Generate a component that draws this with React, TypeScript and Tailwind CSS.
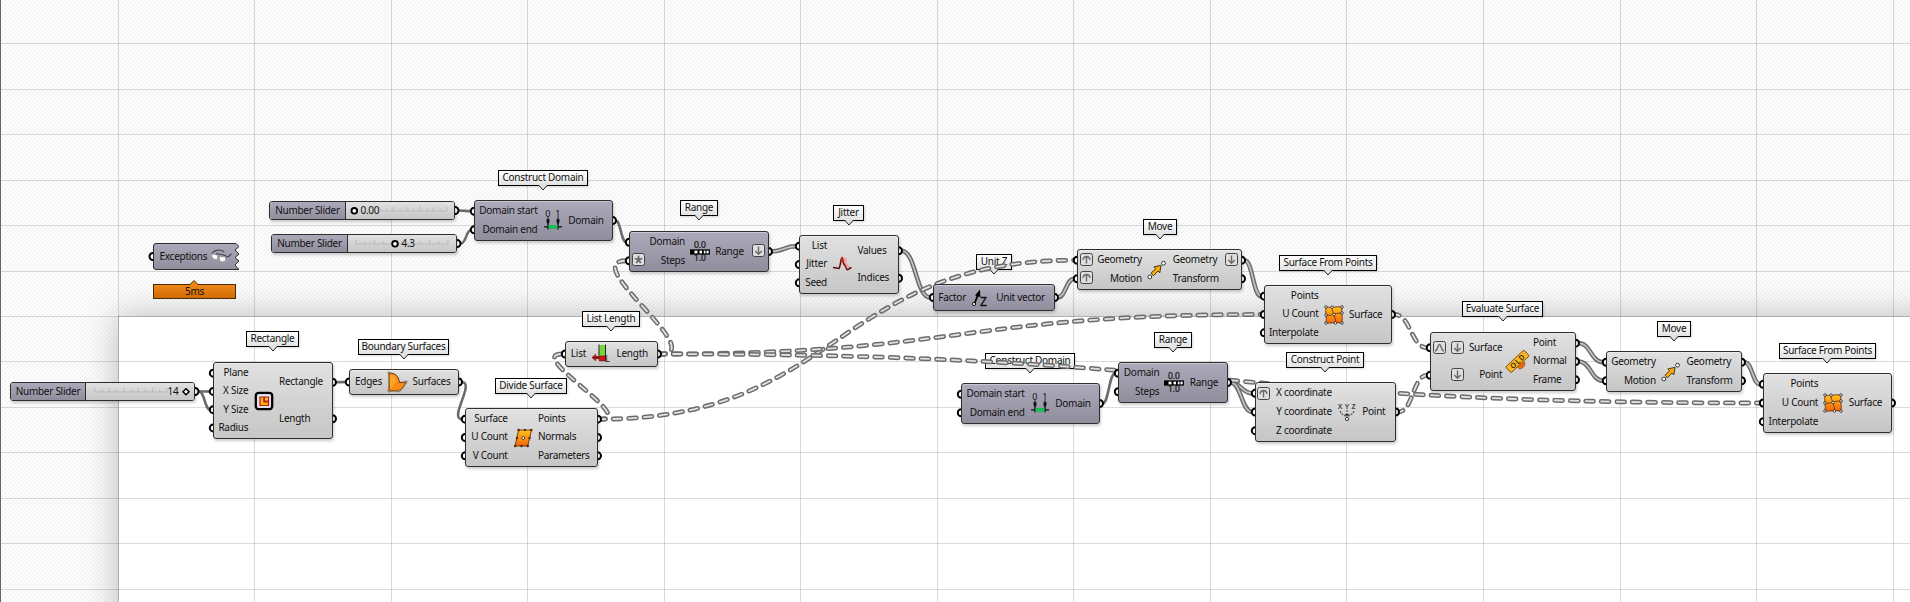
import React from "react";

type IconName =
  | "rectangle" | "boundary" | "divide" | "length" | "domain" | "range" | "jitter"
  | "unitz" | "move" | "surface" | "xyz" | "old";
type ChipName = "up" | "down" | "star" | "curve";
type Chip = { kind: ChipName; x: number; y: number };
type NodeSpec = {
  id: string;
  name: string;
  x: number; y: number; r: number; b: number;
  inputs: string[];
  outputs: string[];
  inRight: number;
  outLeft: number;
  icon: IconName;
  dark?: boolean;
  chips?: Chip[];
  tag: { x: number; r: number; y: number; tip: number };
};

const NODES: NodeSpec[] = [
  { id: "rect", name: "Rectangle", x: 213, y: 362, r: 333, b: 439, inputs: ["Plane", "X Size", "Y Size", "Radius"], outputs: ["Rectangle", "Length"], inRight: 248.3, outLeft: 279, icon: "rectangle", tag: { x: 246, r: 299, y: 331, tip: 273 } },
  { id: "bound", name: "Boundary Surfaces", x: 349, y: 369, r: 459, b: 395, inputs: ["Edges"], outputs: ["Surfaces"], inRight: 382, outLeft: 412.5, icon: "boundary", tag: { x: 358, r: 449, y: 339, tip: 404 } },
  { id: "div", name: "Divide Surface", x: 465, y: 408, r: 598, b: 467, inputs: ["Surface", "U Count", "V Count"], outputs: ["Points", "Normals", "Parameters"], inRight: 507.7, outLeft: 538, icon: "divide", tag: { x: 495, r: 567, y: 378, tip: 531 } },
  { id: "len", name: "List Length", x: 565, y: 341, r: 658, b: 367, inputs: ["List"], outputs: ["Length"], inRight: 586, outLeft: 616.5, icon: "length", tag: { x: 582, r: 640, y: 311, tip: 611 } },
  { id: "cd1", name: "Construct Domain", x: 474, y: 200, r: 613, b: 241, inputs: ["Domain start", "Domain end"], outputs: ["Domain"], inRight: 537.5, outLeft: 568.3, icon: "domain", dark: true, tag: { x: 498, r: 588, y: 170, tip: 543 } },
  { id: "rng1", name: "Range", x: 629, y: 231, r: 769, b: 272, inputs: ["Domain", "Steps"], outputs: ["Range"], inRight: 685, outLeft: 715.3, icon: "range", dark: true, chips: [{ kind: "star", x: 632, y: 253 }, { kind: "down", x: 752, y: 244 }], tag: { x: 680, r: 718, y: 200, tip: 699 } },
  { id: "jit", name: "Jitter", x: 799, y: 235, r: 899, b: 294, inputs: ["List", "Jitter", "Seed"], outputs: ["Values", "Indices"], inRight: 827, outLeft: 857.5, icon: "jitter", tag: { x: 833, r: 864, y: 205, tip: 849 } },
  { id: "uz", name: "Unit Z", x: 933, y: 284, r: 1055, b: 311, inputs: ["Factor"], outputs: ["Unit vector"], inRight: 966, outLeft: 996.3, icon: "unitz", dark: true, tag: { x: 976, r: 1012, y: 254, tip: 994 } },
  { id: "mv1", name: "Move", x: 1077, y: 249, r: 1242, b: 290, inputs: ["Geometry", "Motion"], outputs: ["Geometry", "Transform"], inRight: 1141.8, outLeft: 1172.7, icon: "move", chips: [{ kind: "up", x: 1080, y: 253 }, { kind: "up", x: 1080, y: 271 }, { kind: "down", x: 1225, y: 253 }], tag: { x: 1143, r: 1177, y: 219, tip: 1160 } },
  { id: "sfp1", name: "Surface From Points", x: 1264, y: 285, r: 1392, b: 344, inputs: ["Points", "U Count", "Interpolate"], outputs: ["Surface"], inRight: 1318.5, outLeft: 1349, icon: "surface", tag: { x: 1279, r: 1377, y: 255, tip: 1328 } },
  { id: "cd2", name: "Construct Domain", x: 961, y: 383, r: 1100, b: 424, inputs: ["Domain start", "Domain end"], outputs: ["Domain"], inRight: 1024.7, outLeft: 1055.3, icon: "domain", dark: true, tag: { x: 985, r: 1075, y: 353, tip: 1030 } },
  { id: "rng2", name: "Range", x: 1118, y: 362, r: 1228, b: 403, inputs: ["Domain", "Steps"], outputs: ["Range"], inRight: 1159.3, outLeft: 1189.7, icon: "range", dark: true, tag: { x: 1154, r: 1192, y: 332, tip: 1173 } },
  { id: "cp", name: "Construct Point", x: 1255, y: 382, r: 1396, b: 442, inputs: ["X coordinate", "Y coordinate", "Z coordinate"], outputs: ["Point"], inRight: 1331.8, outLeft: 1362.3, icon: "xyz", chips: [{ kind: "up", x: 1257, y: 387 }], tag: { x: 1286, r: 1364, y: 352, tip: 1325 } },
  { id: "ev", name: "Evaluate Surface", x: 1430, y: 332, r: 1576, b: 391, inputs: ["Surface", "Point"], outputs: ["Point", "Normal", "Frame"], inRight: 1502.3, outLeft: 1533, icon: "old", chips: [{ kind: "curve", x: 1433, y: 341 }, { kind: "down", x: 1451, y: 341 }, { kind: "down", x: 1451, y: 368 }], tag: { x: 1462, r: 1543, y: 301, tip: 1503 } },
  { id: "mv2", name: "Move", x: 1606, y: 351, r: 1742, b: 392, inputs: ["Geometry", "Motion"], outputs: ["Geometry", "Transform"], inRight: 1655.8, outLeft: 1686.5, icon: "move", tag: { x: 1657, r: 1691, y: 321, tip: 1674 } },
  { id: "sfp2", name: "Surface From Points", x: 1763, y: 373, r: 1892, b: 433, inputs: ["Points", "U Count", "Interpolate"], outputs: ["Surface"], inRight: 1818.2, outLeft: 1848.7, icon: "surface", tag: { x: 1779, r: 1876, y: 343, tip: 1827 } },
];

type SliderSpec = { id: string; x: number; y: number; r: number; split: number; t0: number; t1: number; knob: number; text: number; value: string; diamond?: boolean };
const SLIDERS: SliderSpec[] = [
  { id: "s1", x: 269, y: 201, r: 455, split: 345, t0: 379, t1: 446, knob: 354.3, text: 360.5, value: "0.00" },
  { id: "s2", x: 271, y: 234, r: 457, split: 347, t0: 355, t1: 447, knob: 395, text: 401.5, value: "4.3" },
  { id: "s3", x: 10, y: 382, r: 195, split: 85, t0: 94, t1: 166, knob: 186, text: 167.5, value: "14", diamond: true },
];

type Pt = [number, number];
const rowY = (y: number, b: number, count: number, i: number) => y + 2 + ((b - y - 4) * (i + 0.5)) / count;

function outPort(id: string, i = 0): Pt {
  const s = SLIDERS.find((v) => v.id === id);
  if (s) return [s.r + 1, s.y + 9.5];
  const n = NODES.find((v) => v.id === id)!;
  return [n.r - 0.5, rowY(n.y, n.b, n.outputs.length, i)];
}
function inPort(id: string, i = 0): Pt {
  const n = NODES.find((v) => v.id === id)!;
  return [n.x + 0.3, rowY(n.y, n.b, n.inputs.length, i)];
}

type Kind = "single" | "double" | "dashed";
const WIRES: [string, number, string, number, Kind][] = [
  ["s3", 0, "rect", 1, "single"],
  ["s3", 0, "rect", 2, "single"],
  ["s1", 0, "cd1", 0, "single"],
  ["s2", 0, "cd1", 1, "single"],
  ["cd1", 0, "rng1", 0, "single"],
  ["rect", 0, "bound", 0, "single"],
  ["bound", 0, "div", 0, "single"],
  ["cd2", 0, "rng2", 0, "single"],
  ["rng1", 0, "jit", 0, "double"],
  ["jit", 0, "uz", 0, "double"],
  ["uz", 0, "mv1", 1, "double"],
  ["mv1", 0, "sfp1", 0, "double"],
  ["rng2", 0, "cp", 0, "double"],
  ["rng2", 0, "cp", 1, "double"],
  ["ev", 0, "mv2", 0, "double"],
  ["ev", 1, "mv2", 1, "double"],
  ["mv2", 0, "sfp2", 0, "double"],
  ["div", 0, "len", 0, "dashed"],
  ["div", 0, "mv1", 0, "dashed"],
  ["len", 0, "rng1", 1, "dashed"],
  ["len", 0, "sfp1", 1, "dashed"],
  ["len", 0, "sfp2", 1, "dashed"],
  ["sfp1", 0, "ev", 0, "dashed"],
  ["cp", 0, "ev", 1, "dashed"],
];

function wirePath(a: Pt, b: Pt) {
  const x0 = a[0] + 3, x1 = b[0] - 3;
  const dx = x1 - x0, dy = b[1] - a[1];
  const h = dx > 0 ? dx / 2 + (dx < 12 && dy > 25 ? 14 : 0) : Math.hypot(dx, dy) / 2;
  return `M${x0} ${a[1]}C${x0 + h} ${a[1]} ${x1 - h} ${b[1]} ${x1} ${b[1]}`;
}

function Wire({ d, kind }: { d: string; kind: Kind }) {
  if (kind === "single") return <path d={d} stroke="#6b6b6b" strokeWidth="2.6" />;
  if (kind === "double")
    return (
      <g>
        <path d={d} stroke="#6c6c6c" strokeWidth="4.6" />
        <path d={d} stroke="#c4c4c4" strokeWidth="1.6" />
      </g>
    );
  return (
    <g strokeLinecap="round" strokeDasharray="7.8 7.7" strokeDashoffset="3">
      <path d={d} stroke="#6c6c6c" strokeWidth="4.8" />
      <path d={d} stroke="#e0e0e0" strokeWidth="1.8" />
    </g>
  );
}

function Wires() {
  return (
    <svg className="absolute inset-0" width="1910" height="602" fill="none">
      {WIRES.map(([from, i, to, j, kind], k) => (
        <Wire key={k} d={wirePath(outPort(from, i), inPort(to, j))} kind={kind} />
      ))}
      <g fill="#fff" stroke="#000" strokeWidth="2">
        {NODES.flatMap((n) => [
          ...n.inputs.map((_, i) => {
            const [x, y] = inPort(n.id, i);
            return <circle key={n.id + "i" + i} cx={x} cy={y} r="3.5" />;
          }),
          ...n.outputs.map((_, i) => {
            const [x, y] = outPort(n.id, i);
            return <circle key={n.id + "o" + i} cx={x} cy={y} r="3.5" />;
          }),
        ])}
        {SLIDERS.map((s) => (
          <circle key={s.id} cx={s.r} cy={s.y + 9.5} r="3.5" />
        ))}
        <circle cx="153" cy="256.5" r="3.5" />
      </g>
    </svg>
  );
}

function Grid() {
  const xs = Array.from({ length: 14 }, (_, i) => Math.floor(118 + i * 136.55));
  const ys = Array.from({ length: 13 }, (_, i) => Math.floor(43.7 + i * 45.47));
  return (
    <svg className="absolute inset-0" width="1910" height="602" shapeRendering="crispEdges" fill="#000" fillOpacity="0.14">
      {xs.map((x) => <rect key={x} x={x} y="0" width="1" height="602" />)}
      {ys.map((y) => <rect key={y} x="0" y={y} width="1910" height="1" />)}
      <rect x="0" y="0" width="1" height="602" fill="#666" fillOpacity="1" />
      <rect x="118" y="316" width="1" height="286" fillOpacity="0.2" />
      <rect x="118" y="316" width="1792" height="1" fillOpacity="0.2" />
    </svg>
  );
}

function SurfaceDots({ pts }: { pts: Pt[] }) {
  return (
    <g fill="#fff" stroke="#222" strokeWidth="0.8">
      {pts.map(([x, y]) => <circle key={x + "," + y} cx={x} cy={y} r="1.3" />)}
    </g>
  );
}

function Icon({ name }: { name: IconName }) {
  const t = { fontFamily: "Noto Sans", fill: "#111" };
  const body: Record<IconName, React.ReactNode> = {
    rectangle: (
      <>
        <rect x="1.8" y="1.8" width="16.4" height="16.4" rx="3" fill="#dfdff0" stroke="#000" strokeWidth="2.3" />
        <path d="M6 6h8.500v8.500H6z" fill="#fdb515" stroke="#b5200c" strokeWidth="1.2" />
        <path d="M10.200 6v4.500h4.300" fill="#ffe08a" stroke="#c01808" strokeWidth="1.8" />
      </>
    ),
    boundary: (
      <>
        <path d="M2 1C8 1 12 4 12.300 10.500L19 10C18 13 15.500 17.500 12 18.800L2 19Z" fill="#f98a18" stroke="#4a2a08" strokeWidth="0.9" />
        <path d="M3 2.500C7 2.500 9 6 9.500 10L3 17Z" fill="#ffb52e" opacity="0.6" />
        <g fill="#e8c9a0" stroke="#5a3410" strokeWidth="0.6"><circle cx="2" cy="1" r="1.100" /><circle cx="2" cy="19" r="1.100" /><circle cx="12" cy="18.800" r="1.100" /><circle cx="19" cy="10" r="1.100" /></g>
      </>
    ),
    divide: (
      <>
        <path d="M5.500 2H18.500L14.800 18H2Z" fill="url(#orange)" stroke="#6a3208" strokeWidth="0.9" />
        <g fill="#5b2606"><circle cx="5.700" cy="2" r="1.300" /><circle cx="12" cy="1.900" r="1.200" /><circle cx="18.300" cy="2" r="1.300" /><circle cx="4" cy="10" r="1.200" /><circle cx="16.500" cy="10" r="1.200" /><circle cx="2.200" cy="18" r="1.300" /><circle cx="8.500" cy="18" r="1.200" /><circle cx="14.700" cy="18" r="1.300" /></g>
        <circle cx="10.200" cy="10" r="1.500" fill="#fff" stroke="#5b2606" strokeWidth="0.9" />
      </>
    ),
    length: (
      <>
        <rect x="8.300" y="1" width="6" height="12" fill="#74d635" />
        <path d="M8 .500v11M14.500 .500v17" stroke="#222" strokeWidth="1" />
        <path d="M1 13.500l3.500-3.300v2H8v2.600H4.500v2zM8.300 12h6v5h-6z" fill="#cf1616" stroke="#5a0000" strokeWidth="0.500" />
        <path d="M1.500 13.500h6" stroke="#700" strokeWidth="1" />
        <text x="14.500" y="17.500" fontSize="8" {...t}>L</text>
      </>
    ),
    domain: (
      <>
        <text x="2.200" y="5.800" fontSize="9" {...t}>0</text>
        <text x="12.200" y="5.800" fontSize="9" {...t}>1</text>
        <path d="M5 6.500v12M15 6.500v12M1 15.800h4M15 15.800h4" stroke="#111" strokeWidth="1.300" />
        <path d="M3.200 8.500h3.600l-.800 4H4zM13.200 8.500h3.600l-.800 4h-2z" fill="#111" />
        <rect x="5.600" y="14" width="8.800" height="3.800" fill="#17bd58" />
      </>
    ),
    range: (
      <>
        <text x="10" y="6.300" fontSize="8.500" textAnchor="middle" stroke="#111" strokeWidth="0.200" letterSpacing="0" {...t}>0.0</text>
        <rect x="0.700" y="8" width="18.600" height="4" fill="#fff" stroke="#000" strokeWidth="1.300" />
        <path d="M1 8h3.500v4H1zM7.500 8h2v4h-2zM12 8h1.800v4H12zM15.500 8h1v4h-1z" />
        <text x="10" y="19.200" fontSize="8.500" textAnchor="middle" stroke="#111" strokeWidth="0.200" letterSpacing="0" {...t}>1.0</text>
      </>
    ),
    jitter: (
      <>
        <path d="M8 10L8.500 2L14.500 3L15 9L20 13.500L16.500 15L11 9L3 16L4 12Z" fill="#f59a9a" opacity="0.850" />
        <path d="M1 12.500C4 12.500 5.500 13.500 7 13.500C8.500 12 8.500 3 10 3C11.500 3.500 10.500 9 12.500 10C14.500 11 13.500 14.800 15.500 14.800L19.500 12.300" fill="none" stroke="#3f1210" strokeWidth="1.400" />
        <path d="M9 6L10 3L11.200 7.500M12.500 10L14.200 13" stroke="#c02020" strokeWidth="1.200" fill="none" />
      </>
    ),
    unitz: (
      <>
        <path d="M3 16.500L7.800 5" stroke="#000" strokeWidth="1.900" />
        <path d="M9 1.500L4 7.500L9.300 9Z" fill="#000" />
        <circle cx="3" cy="16" r="1.600" fill="#fff" stroke="#000" strokeWidth="0.900" />
        <text x="9" y="18.300" fontSize="12" stroke="#111" strokeWidth="0.400" {...t}>Z</text>
      </>
    ),
    move: (
      <>
        <path d="M4 13.200L8.700 8.800L6.800 7L14 5.300L12.800 12.800L11 11L6.400 15.800Z" fill="#f9ab10" stroke="#3a2800" strokeWidth="0.900" />
        <g fill="#fff" stroke="#333" strokeWidth="1"><circle cx="2.800" cy="17" r="1.900" /><circle cx="16.500" cy="3.200" r="1.900" /></g>
      </>
    ),
    surface: (
      <>
        <path d="M2 2C7 3.500 12 1 18 2C17 8 19 12 18 18C12 17 7 18.500 2 18C3 12 1 7 2 2Z" fill="url(#orange)" stroke="#7a2e05" strokeWidth="0.900" />
        <path d="M2.500 10C8 11.500 10 7 17.500 8.500M7.500 2.500C9 8 11 12 12 17.500" stroke="#7a2e05" strokeWidth="0.900" fill="none" />
        <SurfaceDots pts={[[2, 2], [8, 2.2], [18, 2], [2, 10], [10, 9.5], [18, 8], [2, 18], [11.5, 18], [18, 18]]} />
      </>
    ),
    xyz: (
      <>
        <g fontSize="7.200" fontFamily="Noto Sans" fill="#333" stroke="#333" strokeWidth="0.200">
          <text x="1" y="6.500">X</text><text x="7.900" y="6.500">Y</text><text x="14.600" y="6.500">Z</text>
        </g>
        <path d="M3 9c1 2.500 3 4 5.500 5M10 8v5M17 9c-1 2.500-3 4-5.500 5" stroke="#555" strokeWidth="1.200" strokeDasharray="2 1" fill="none" />
        <path d="M7.500 12h5L10 15z" fill="#444" />
        <circle cx="10" cy="17" r="1.600" fill="#fff" stroke="#333" strokeWidth="1" />
      </>
    ),
    old: (
      <>
        <path d="M8 14c3-4 6-6 8.500-4c1.500 3-1 6.500-5 7z" fill="#ea6a10" stroke="#803505" strokeWidth="0.500" />
        <g transform="rotate(-43 10 10)">
          <rect x="-2.500" y="5.200" width="25" height="8" rx="1.200" fill="#f9b827" stroke="#7a4b00" strokeWidth="0.900" />
          <text x="10.400" y="11.900" textAnchor="middle" fontSize="7.300" fontWeight="600" fontFamily="Noto Sans" fill="#3a2600" letterSpacing="0.900">OLD</text>
        </g>
      </>
    ),
  };
  return <svg width="20" height="20" viewBox="0 0 20 20" className="shrink-0 overflow-visible">{body[name]}</svg>;
}

function ChipIcon({ kind }: { kind: ChipName }) {
  const p: Record<ChipName, React.ReactNode> = {
    down: <path d="M6.500 2.500v7.500M3.300 7l3.200 3.200 3.200-3.200" />,
    up: <path d="M6.500 10.500V3.500M3 6.800Q3.500 3.600 6.500 3.400Q9.500 3.600 10 6.800" />,
    star: <path d="M6.500 6.700V2.700M6.500 6.700L2.700 5.500M6.500 6.700L10.300 5.500M6.500 6.700L4.200 10M6.500 6.700L8.800 10" strokeWidth="1.800" />,
    curve: <path d="M2 10c3 0 2.500-6.500 4.500-6.500S8 10 11 10" />,
  };
  return (
    <svg width="13" height="13" viewBox="0 0 13 13" fill="none" stroke="#6a6a6a" strokeWidth="1.400">
      <rect x="0.500" y="0.500" width="12" height="12" rx="2" fill="#dedede" stroke="#444" strokeWidth="1" />
      {p[kind]}
    </svg>
  );
}

const LIGHT = "bg-linear-to-b from-[#e1e1e1] to-[#c6c6c6]";
const DARK = "bg-linear-to-b from-[#acaaba] to-[#908e9d]";

function Tag({ n }: { n: NodeSpec }) {
  const { x, r, y, tip } = n.tag;
  return (
    <div className="absolute" style={{ left: x, top: y, width: r - x }}>
      <div className="flex h-4 items-center justify-center border border-black bg-linear-to-b from-white to-[#e2e2e2] shadow-[1px_1px_2px_rgba(0,0,0,0.150)]">
        <span className="-mt-0.5">{n.name}</span>
      </div>
      <svg className="absolute top-[15px]" style={{ left: tip - x - 5 }} width="10" height="6">
        <path d="M0.500 0L5 5L9.500 0" fill="#e2e2e2" stroke="#222" strokeWidth="1" />
      </svg>
    </div>
  );
}

function GraphNode({ n }: { n: NodeSpec }) {
  const w = n.r - n.x;
  return (
    <div
      className={`absolute flex rounded-[3px] border border-[#2e2e2e] py-px shadow-[1px_2px_3px_rgba(0,0,0,0.200),inset_0_1px_0_rgba(255,255,255,0.350)] ${n.dark ? DARK : LIGHT}`}
      style={{ left: n.x, top: n.y, width: w, height: n.b - n.y }}
    >
      <div className="flex shrink-0 flex-col text-right" style={{ width: n.inRight - n.x - 1 }}>
        {n.inputs.map((s) => (
          <div key={s} className="flex flex-1 items-center justify-end"><span className="-mt-0.5">{s}</span></div>
        ))}
      </div>
      <div className="flex shrink-0 items-center justify-center" style={{ width: n.outLeft - n.inRight }}>
        <Icon name={n.icon} />
      </div>
      <div className="flex flex-1 flex-col">
        {n.outputs.map((s) => (
          <div key={s} className="flex flex-1 items-center"><span className="-mt-0.5">{s}</span></div>
        ))}
      </div>
      {n.chips?.map((c) => (
        <div key={c.x + "-" + c.y} className="absolute" style={{ left: c.x - n.x - 1, top: c.y - n.y - 1 }}>
          <ChipIcon kind={c.kind} />
        </div>
      ))}
    </div>
  );
}

function Slider({ s }: { s: SliderSpec }) {
  const ticks = Array.from({ length: 11 }, (_, i) => s.t0 + ((s.t1 - s.t0) * i) / 10 - s.split);
  return (
    <div
      className="absolute flex h-[19px] overflow-hidden rounded-[3px] border border-[#2e2e2e] shadow-[1px_2px_3px_rgba(0,0,0,0.200)]"
      style={{ left: s.x, top: s.y, width: s.r - s.x }}
    >
      <div className={`flex shrink-0 items-center justify-center border-r border-[#2e2e2e] ${DARK}`} style={{ width: s.split - s.x }}>
        <span className="-mt-px">Number Slider</span>
      </div>
      <div className={`relative flex-1 ${LIGHT}`}>
        <svg className="absolute inset-0" width={s.r - s.split} height="17" fill="none">
          <path d={`M${ticks[0]} 9H${ticks[10]}` + ticks.map((t, i) => `M${t} 9v${i % 2 ? -2.5 : -4}`).join("")} stroke="#b4b4b4" strokeWidth="0.800" />
          {s.diamond ? (
            <path d={`M${s.knob - s.split - 1} 5.700l3 3 -3 3 -3-3z`} stroke="#000" strokeWidth="1.500" fill="#fff" />
          ) : (
            <circle cx={s.knob - s.split - 1} cy="8.800" r="2.800" stroke="#000" strokeWidth="1.900" fill="#fff" />
          )}
        </svg>
        <span className="absolute top-0 leading-4" style={{ left: s.text - s.split - 1 }}>{s.value}</span>
      </div>
    </div>
  );
}

function Exceptions() {
  return (
    <div className="absolute left-[153px] top-[243px] h-[27px] w-[86px]">
      <svg className="absolute inset-0" width="86" height="27">
        <path d="M3 .500H83L86 3.500L82 7L86 11L82 14.500L86 18L82 22L86 26.500H3Q.500 26.500 .500 24V3Q.500 .500 3 .500Z" fill="url(#slate)" stroke="#2e2e2e" />
        <g fill="none" stroke="#444" strokeWidth="1.100">
          <path d="M58.500 10.500C62 6.500 68 6 71 9M63 10.500L73 12.500M72.500 14Q76.500 14 78.500 10.500" />
          <path d="M58.500 11l6 1.200v4q-4 .800-5.500-2zM66.500 13.500l6 .500v3.500q-3 2.500-6 0z" fill="#fff" stroke="#888" strokeWidth="0.600" />
        </g>
      </svg>
      <div className="relative flex h-full items-center pl-[6.500px]"><span className="-mt-0.5">Exceptions</span></div>
    </div>
  );
}

function Profiler() {
  return (
    <div className="absolute left-[153px] top-[284px] w-[83px]">
      <div className="flex h-[15px] items-center justify-center border border-[#4a2a00] bg-linear-to-b from-[#ef8618] to-[#cf6b05]">
        <span className="-mt-0.5">5ms</span>
      </div>
      <svg className="absolute left-[36px] top-[-4px]" width="10" height="6">
        <path d="M.500 5L5 .500L9.500 5" fill="#ef8618" stroke="#4a2a00" />
      </svg>
    </div>
  );
}

export default function App() {
  return (
    <main className="relative h-[602px] w-[1910px] overflow-hidden whitespace-nowrap bg-[repeating-linear-gradient(135deg,#ffffff_0px,#ffffff_1.400px,#f3f3f3_1.410px,#f3f3f3_2.828px)] font-['Noto_Sans',sans-serif] text-[10px] leading-none tracking-[-0.27px] text-[#111]">
      <svg className="absolute" width="0" height="0">
        <defs>
          <linearGradient id="orange" x1="0" y1="0" x2="0" y2="1"><stop offset="0" stopColor="#ffc21c" /><stop offset="1" stopColor="#f2660c" /></linearGradient>
          <linearGradient id="slate" x1="0" y1="0" x2="0" y2="1"><stop offset="0" stopColor="#acaaba" /><stop offset="1" stopColor="#908e9d" /></linearGradient>
        </defs>
      </svg>
      <div className="flex h-full pl-[118px] pt-[316px]">
        <div className="-mb-20 -mr-20 flex-1 bg-white shadow-[0_0_32px_rgba(0,0,0,0.260)]" />
      </div>
      <Grid />
      {NODES.map((n) => <Tag key={n.id} n={n} />)}
      <Wires />
      {NODES.map((n) => <GraphNode key={n.id} n={n} />)}
      {SLIDERS.map((s) => <Slider key={s.id} s={s} />)}
      <Exceptions />
      <Profiler />
    </main>
  );
}
